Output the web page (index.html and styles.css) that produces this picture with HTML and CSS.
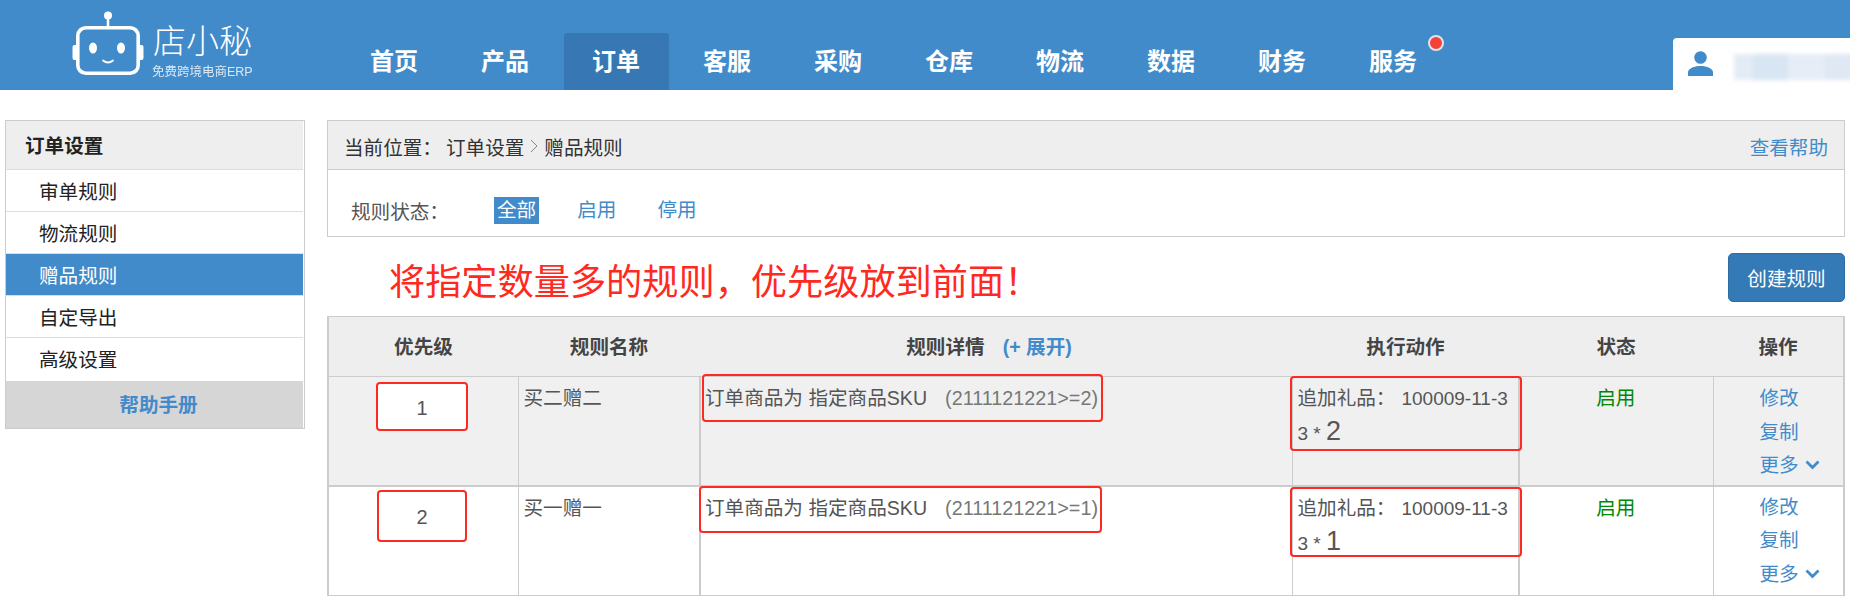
FILE: index.html
```html
<!doctype html>
<html lang="zh-CN">
<head>
<meta charset="utf-8">
<title>赠品规则</title>
<link rel="stylesheet" href="styles.css">
</head>
<body>

<header class="topbar">
	<div class="logo">
		<svg class="logo-bot" width="72" height="66" viewBox="0 0 72 66">
			<circle cx="36" cy="5.5" r="4" fill="#fff"/>
			<path d="M36 8v10" stroke="#fff" stroke-width="2.5"/>
			<rect x="5.8" y="17.8" width="60.4" height="45.4" rx="8" fill="none" stroke="#fff" stroke-width="3.6"/>
			<path d="M4 35h-1.500a2 2 0 0 0-2 2v11a2 2 0 0 0 2 2h1.500zM68 35h1.500a2 2 0 0 1 2 2v11a2 2 0 0 1-2 2h-1.500z" fill="#fff"/>
			<ellipse cx="21" cy="38" rx="4" ry="5.500" fill="#fff"/>
			<ellipse cx="49" cy="38" rx="4" ry="5.500" fill="#fff"/>
			<path d="M31 50.500q5 4 10 0" fill="none" stroke="#fff" stroke-width="1.800" stroke-linecap="round"/>
		</svg>
		<div class="logo-text">
			<div class="logo-name">店小秘</div>
			<div class="logo-sub">免费跨境电商ERP</div>
		</div>
	</div>

	<nav class="nav">
		<a class="nav-item">首页</a>
		<a class="nav-item">产品</a>
		<a class="nav-item active">订单</a>
		<a class="nav-item">客服</a>
		<a class="nav-item">采购</a>
		<a class="nav-item">仓库</a>
		<a class="nav-item">物流</a>
		<a class="nav-item">数据</a>
		<a class="nav-item">财务</a>
		<a class="nav-item">服务<span class="dot"></span></a>
	</nav>

	<div class="user">
		<svg class="user-icon" width="25" height="25" viewBox="0 0 25 25">
			<circle cx="12.500" cy="6.500" r="6.300" fill="#428bca"/>
			<path d="M0 25v-3.500c0-4 6-6.500 12.500-6.500s12.500 2.500 12.500 6.500v3.500z" fill="#428bca"/>
		</svg>
		<div class="user-blur">
			<i class="blur-a"></i><i class="blur-b"></i><i class="blur-c"></i><i class="blur-d"></i>
		</div>
	</div>
</header>

<div class="page">

	<aside class="side">
		<div class="side-title">订单设置</div>
		<a class="side-item">审单规则</a>
		<a class="side-item">物流规则</a>
		<a class="side-item active">赠品规则</a>
		<a class="side-item">自定导出</a>
		<a class="side-item last">高级设置</a>
		<div class="side-help">帮助手册</div>
	</aside>

	<main class="main">

		<section class="panel">
			<div class="crumb">
				<span class="crumb-label">当前位置：</span>
				<span>订单设置</span>
				<svg class="crumb-sep" width="8" height="14" viewBox="0 0 8 14"><path d="M1 1l6 6-6 6" fill="none" stroke="#888" stroke-width="1"/></svg>
				<span>赠品规则</span>
				<a class="crumb-help">查看帮助</a>
			</div>
			<div class="filter">
				<span class="filter-label">规则状态：</span>
				<a class="filter-item on">全部</a>
				<a class="filter-item">启用</a>
				<a class="filter-item">停用</a>
			</div>
		</section>

		<div class="actions">
			<div class="notice">将指定数量多的规则，优先级放到前面！</div>
			<button class="btn">创建规则</button>
		</div>

		<div class="rules">
			<table>
				<thead>
					<tr>
						<th class="col-prio">优先级</th>
						<th class="col-name">规则名称</th>
						<th class="col-detail">规则详情<a class="expand">(+ 展开)</a></th>
						<th class="col-action">执行动作</th>
						<th class="col-state">状态</th>
						<th class="col-ops">操作</th>
					</tr>
				</thead>
				<tbody>
					<tr class="odd">
						<td class="cell-prio"><div class="prio">1</div></td>
						<td>买二赠二</td>
						<td class="thick">订单商品为 指定商品SKU<span class="cond">(2111121221&gt;=2)</span></td>
						<td class="cell-action">
							<div>追加礼品：<span class="sku">100009-11-3</span></div>
							<div class="sku-end">3 * <span class="qty">2</span></div>
						</td>
						<td class="thick center ok">启用</td>
						<td class="ops"><a>修改</a><a>复制</a><a>更多<svg width="15" height="10" viewBox="0 0 15 10"><path d="M1.500 1.500l6 6 6-6" fill="none" stroke="#428bca" stroke-width="2.800"/></svg></a></td>
					</tr>
					<tr class="even">
						<td class="cell-prio"><div class="prio prio-tall">2</div></td>
						<td>买一赠一</td>
						<td class="thick">订单商品为 指定商品SKU<span class="cond">(2111121221&gt;=1)</span></td>
						<td class="cell-action">
							<div>追加礼品：<span class="sku">100009-11-3</span></div>
							<div class="sku-end">3 * <span class="qty">1</span></div>
						</td>
						<td class="thick center ok">启用</td>
						<td class="ops"><a>修改</a><a>复制</a><a>更多<svg width="15" height="10" viewBox="0 0 15 10"><path d="M1.500 1.500l6 6 6-6" fill="none" stroke="#428bca" stroke-width="2.800"/></svg></a></td>
					</tr>
				</tbody>
			</table>

			<!-- red annotation boxes drawn over the table -->
			<div class="mark mark-detail-1"></div>
			<div class="mark mark-detail-2"></div>
			<div class="mark mark-action-1"></div>
			<div class="mark mark-action-2"></div>
		</div>

	</main>
</div>

</body>
</html>
```

FILE: styles.css
```css
* { box-sizing: border-box; }
body { margin: 0; font: 19.6px "Liberation Sans", "Noto Sans CJK SC", sans-serif; color: #555; background: #fff; overflow: hidden; }
a { color: #428bca; text-decoration: none; }

/* top bar */
.topbar { display: flex; align-items: flex-end; height: 90px; background: #428bca; }
.logo { display: flex; width: 270px; height: 90px; margin-left: 72px; padding-top: 10px; }
.logo-bot { flex: none; }
.logo-text { margin-left: 8px; color: #fff; padding-top: 13px; }
.logo-name { margin-left: 1px; font-size: 33px; font-weight: 300; line-height: 38px; white-space: nowrap; }
.logo-sub { font-size: 12.5px; line-height: 16px; margin-top: 3px; opacity: .8; white-space: nowrap; }

.nav { display: flex; gap: 6px; }
.nav-item { position: relative; display: block; height: 57px; padding: 0 29px 0 28px; font-size: 24px; font-weight: bold; line-height: 57px; color: #fff; border-radius: 3px 3px 0 0; }
.nav-item.active { background: #3777b3; }
.dot { position: absolute; left: 87px; top: 2px; width: 16px; height: 16px; border-radius: 50%; background: #f44336; border: 2px solid #dfe3e8; }

.user { display: flex; align-items: flex-start; margin-left: auto; width: 177px; height: 52px; padding: 13px 0 0 15px; background: #fff; border-radius: 4px 0 0 0; overflow: hidden; }
.user-icon { flex: none; }
.user-blur { display: flex; flex: none; height: 26px; margin: 3px 0 0 21px; filter: blur(2px); }
.user-blur i { display: block; height: 100%; }
.blur-a { width: 19px; background: #e3ecf6; }
.blur-b { width: 35px; background: #d8e5f2; }
.blur-c { width: 37px; background: #e6edf6; }
.blur-d { width: 30px; background: #dfe8f3; }

/* page */
.page { display: flex; gap: 22px; padding: 30px 5px 0 5px; }

.side { flex: none; width: 300px; padding-right: 1px; border: 1px solid #ccc; align-self: flex-start; }
.side-title { height: 49px; padding-left: 19px; font-weight: bold; line-height: 50px; color: #222; background: #eee; border-bottom: 1px solid #ddd; }
.side-item { display: block; height: 42px; padding-left: 33px; line-height: 44px; color: #222; border-bottom: 1px solid #ddd; }
.side-item.active { color: #fff; background: #428bca; }
.side-item.last { border-bottom: 0; height: 43px; }
.side-help { height: 47px; padding-left: 8px; text-align: center; font-weight: bold; line-height: 49px; color: #428bca; background: #d6d6d6; }

.main { flex: 1; min-width: 0; }

.panel { height: 117px; border: 1px solid #ccc; }
.crumb { display: flex; align-items: center; height: 49px; padding: 2px 16px 0; color: #333; background: #eee; border-bottom: 1px solid #ccc; }
.crumb-label { margin-right: 4px; }
.crumb-sep { margin: 0 6px; }
.crumb-help { margin-left: auto; }

.filter { display: flex; align-items: center; height: 66px; padding: 15px 0 0 23px; }
.filter-label { width: 143px; }
.filter-item { margin-right: 35px; line-height: 27px; padding: 0 3px; }
.filter-item.on { color: #fff; background: #428bca; }

.actions { display: flex; justify-content: space-between; height: 79px; padding-top: 16px; }
.notice { margin: 5px 0 0 62px; font-size: 36.2px; line-height: 50px; color: #ff2a1f; }
.btn { width: 117px; height: 49px; font: inherit; color: #fff; background: #337ab7; border: 1px solid #2e6da4; border-radius: 5px; }

/* rules table */
.rules { position: relative; }
table { width: 100%; table-layout: fixed; border-collapse: collapse; border: 1px solid #ccc; border-left-width: 2px; border-right-width: 2px; }
th { height: 60px; padding: 0 0 2px; font-weight: bold; color: #444; background: #eee; border-bottom: 1px solid #ccc; }
th.col-detail { padding-right: 14px; }
td { height: 109px; padding: 4px 5px 0; line-height: 34px; vertical-align: top; border-left: 1px solid #ccc; border-bottom: 2px solid #ccc; color: #555; }
tbody tr:last-child td { border-bottom: 1px solid #ccc; }
tr.even td { height: 110px; }
td.cell-prio { border-left: 0; padding: 0; }
td.thick { border-left: 2px solid #ccc; padding-left: 4px; }
tr.odd td { background: #f0f0f0; }

.col-prio { width: 190px; }
.col-name { width: 182px; }
.col-action { width: 227px; }
.col-state { width: 194px; }
.col-ops { width: 131px; }

.expand { margin-left: 18px; color: #428bca; }
.prio { width: 92px; height: 49px; margin: 5px 0 0 47px; line-height: 49px; text-align: center; font-size: 20px; color: #555; background: #fff; border: 2px solid #ff2a1f; border-radius: 4px; }
.prio-tall { width: 90px; height: 52px; margin: 3px 0 0 48px; line-height: 50px; }
.cond { margin-left: 18px; font-size: 19.8px; color: #777; }
.sku { margin-left: 6px; font-size: 19px; }
.sku-end { font-size: 19px; }
.qty { font-size: 27px; line-height: 30px; }
.center { text-align: center; }
td.ok { color: #080; }
td.ops { padding: 5px 0 0 46px; }
tr.even td.ops { padding-top: 4px; }
.ops a { display: block; line-height: 33.5px; white-space: nowrap; }
.ops svg { margin-left: 6px; vertical-align: 2px; }

.mark { position: absolute; border: 2px solid #ff2a1f; border-radius: 4px; pointer-events: none; }
.mark-detail-1 { left: 375px; top: 58px; width: 401px; height: 48px; }
.mark-detail-2 { left: 372px; top: 170px; width: 403px; height: 47px; }
.mark-action-1 { left: 963px; top: 60px; width: 232px; height: 75px; }
.mark-action-2 { left: 963px; top: 171px; width: 232px; height: 70px; }
```
